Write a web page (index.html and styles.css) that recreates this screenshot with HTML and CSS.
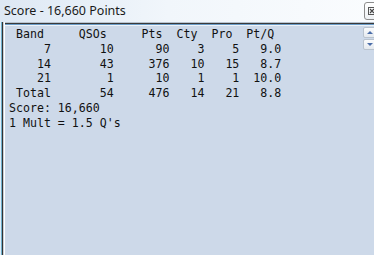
FILE: index.html
```html
<!DOCTYPE html>
<html>
<head>
    <link rel="stylesheet" href="styles.css">
</head>
<body>

<div class="window">
    <div class="titlebar">
        <span class="title">Score - 16,660 Points</span>
        <span class="close">
            <svg width="8" height="8" viewBox="0 0 8 8">
                <rect x="0.5" y="0.5" width="7" height="7" fill="none" stroke="#555" stroke-width="1"/>
                <path d="M2 2 L6 6 M6 2 L2 6" stroke="#444" stroke-width="1.2"/>
            </svg>
        </span>
    </div>
    <div class="frame">
        <pre class="score-text"> Band     QSOs     Pts  Cty  Pro  Pt/Q
     7       10      90    3    5   9.0
    14       43     376   10   15   8.7
    21        1      10    1    1  10.0
 Total       54     476   14   21   8.8
Score: 16,660
1 Mult = 1.5 Q's</pre>
        <div class="spin">
            <div class="spin-btn"><span class="arrow-up"></span></div>
            <div class="spin-btn"><span class="arrow-down"></span></div>
        </div>
    </div>
</div>

</body>
</html>
```

FILE: styles.css
```css
body {
    margin: 0;
    padding: 0;
    background-color: #cdd9e9;
}
.window {
    width: 374px;
    height: 255px;
    overflow: hidden;
    display: flex;
    flex-direction: column;
}
.titlebar {
    height: 22px;
    display: flex;
    justify-content: space-between;
    align-items: flex-start;
    background: linear-gradient(90deg, #dde8f4, #f1f6fb 45%, #fafcfe);
}
.title {
    font-family: "Noto Sans", sans-serif;
    font-size: 12.5px;
    line-height: 16px;
    color: #1a1a1a;
    padding: 3px 0 0 4px;
}
.close {
    width: 16px;
    height: 18px;
    margin: 2px -6px 0 0;
    border: 1px solid #8c8c8c;
    border-radius: 3px;
    background: linear-gradient(#ffffff, #eef1f4);
    display: flex;
    align-items: center;
    padding-left: 3px;
    box-sizing: border-box;
}
.frame {
    flex: 1;
    display: flex;
    background-color: #cdd9e9;
    box-shadow:
        inset 1px 0 0 #e2eef8,
        inset 2px 0 0 #6fb0cc,
        inset 3px 0 0 #333333,
        inset 4px 0 0 #c9d1d9,
        inset 5px 0 0 #ffffff,
        inset 0 1px 0 #b8c4d0,
        inset 0 2px 0 #3a3a3a,
        inset 0 3px 0 #6a9cc8,
        inset 0 4px 0 #eef3f8;
}
.score-text {
    flex: 1;
    margin: 0;
    padding: 5px 0 0 9px;
    font-family: "DejaVu Sans Mono", monospace;
    font-size: 11.6px;
    line-height: 14.8px;
    color: #111;
}
.spin {
    width: 11px;
    padding-top: 5px;
    display: flex;
    flex-direction: column;
    gap: 1px;
}
.spin-btn {
    width: 14px;
    height: 9px;
    border: 1px solid #b9c3ce;
    border-radius: 2px;
    background: linear-gradient(#fbfcfd, #e4e9ee);
    display: flex;
    justify-content: flex-start;
    padding-left: 3px;
    align-items: center;
}
.arrow-up {
    border-left: 3px solid transparent;
    border-right: 3px solid transparent;
    border-bottom: 3px solid #4b6da8;
}
.arrow-down {
    border-left: 3px solid transparent;
    border-right: 3px solid transparent;
    border-top: 3px solid #4b6da8;
}
```
